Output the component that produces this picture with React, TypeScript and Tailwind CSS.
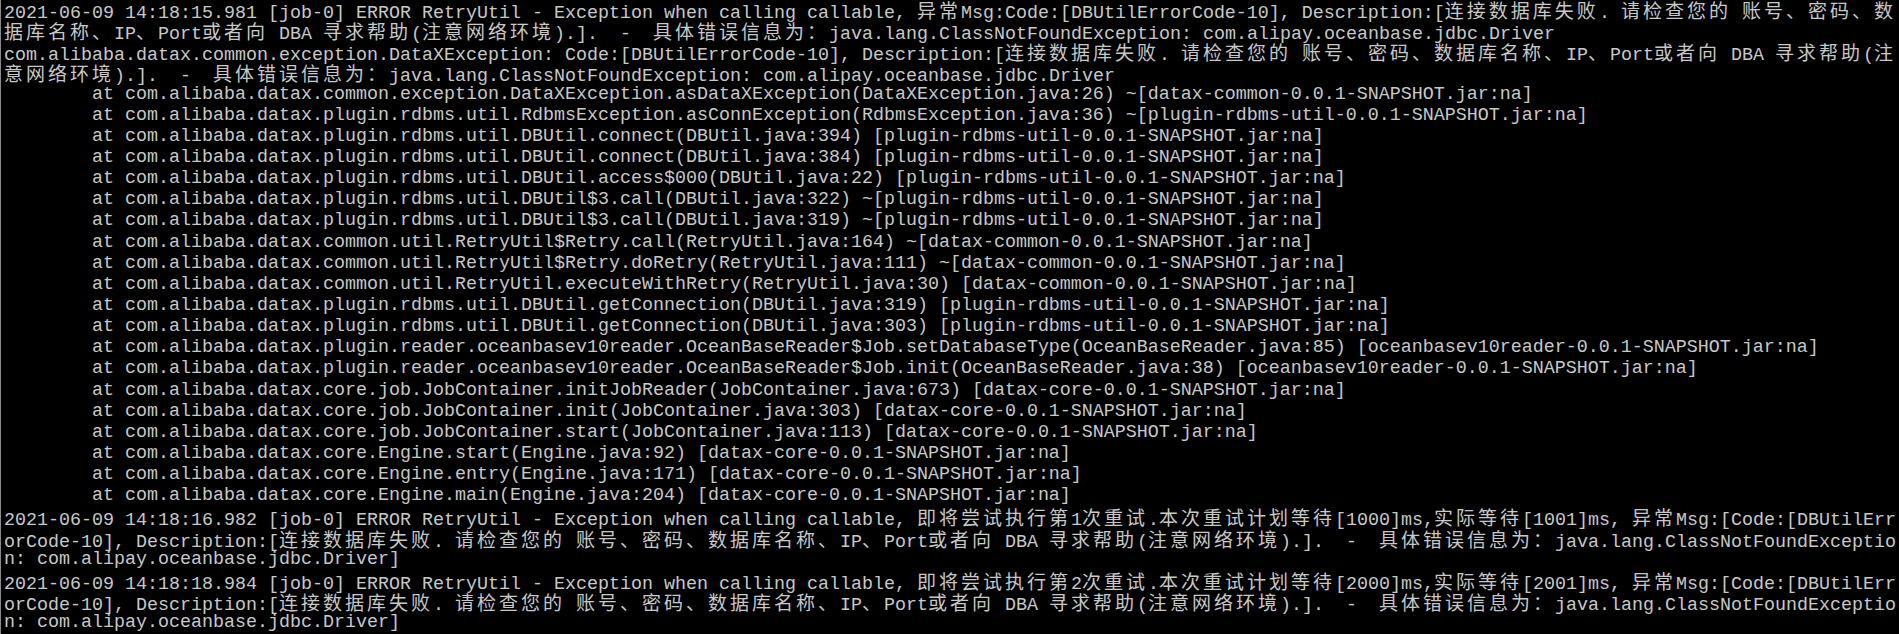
import { FC } from "react";

const TAB = "        ";

const lines: string[] = [
  "2021-06-09 14:18:15.981 [job-0] ERROR RetryUtil - Exception when calling callable, 异常Msg:Code:[DBUtilErrorCode-10], Description:[连接数据库失败. 请检查您的 账号、密码、数",
  "据库名称、IP、Port或者向 DBA 寻求帮助(注意网络环境).].  -  具体错误信息为：java.lang.ClassNotFoundException: com.alipay.oceanbase.jdbc.Driver",
  "com.alibaba.datax.common.exception.DataXException: Code:[DBUtilErrorCode-10], Description:[连接数据库失败. 请检查您的 账号、密码、数据库名称、IP、Port或者向 DBA 寻求帮助(注",
  "意网络环境).].  -  具体错误信息为：java.lang.ClassNotFoundException: com.alipay.oceanbase.jdbc.Driver",
  TAB + "at com.alibaba.datax.common.exception.DataXException.asDataXException(DataXException.java:26) ~[datax-common-0.0.1-SNAPSHOT.jar:na]",
  TAB + "at com.alibaba.datax.plugin.rdbms.util.RdbmsException.asConnException(RdbmsException.java:36) ~[plugin-rdbms-util-0.0.1-SNAPSHOT.jar:na]",
  TAB + "at com.alibaba.datax.plugin.rdbms.util.DBUtil.connect(DBUtil.java:394) [plugin-rdbms-util-0.0.1-SNAPSHOT.jar:na]",
  TAB + "at com.alibaba.datax.plugin.rdbms.util.DBUtil.connect(DBUtil.java:384) [plugin-rdbms-util-0.0.1-SNAPSHOT.jar:na]",
  TAB + "at com.alibaba.datax.plugin.rdbms.util.DBUtil.access$000(DBUtil.java:22) [plugin-rdbms-util-0.0.1-SNAPSHOT.jar:na]",
  TAB + "at com.alibaba.datax.plugin.rdbms.util.DBUtil$3.call(DBUtil.java:322) ~[plugin-rdbms-util-0.0.1-SNAPSHOT.jar:na]",
  TAB + "at com.alibaba.datax.plugin.rdbms.util.DBUtil$3.call(DBUtil.java:319) ~[plugin-rdbms-util-0.0.1-SNAPSHOT.jar:na]",
  TAB + "at com.alibaba.datax.common.util.RetryUtil$Retry.call(RetryUtil.java:164) ~[datax-common-0.0.1-SNAPSHOT.jar:na]",
  TAB + "at com.alibaba.datax.common.util.RetryUtil$Retry.doRetry(RetryUtil.java:111) ~[datax-common-0.0.1-SNAPSHOT.jar:na]",
  TAB + "at com.alibaba.datax.common.util.RetryUtil.executeWithRetry(RetryUtil.java:30) [datax-common-0.0.1-SNAPSHOT.jar:na]",
  TAB + "at com.alibaba.datax.plugin.rdbms.util.DBUtil.getConnection(DBUtil.java:319) [plugin-rdbms-util-0.0.1-SNAPSHOT.jar:na]",
  TAB + "at com.alibaba.datax.plugin.rdbms.util.DBUtil.getConnection(DBUtil.java:303) [plugin-rdbms-util-0.0.1-SNAPSHOT.jar:na]",
  TAB + "at com.alibaba.datax.plugin.reader.oceanbasev10reader.OceanBaseReader$Job.setDatabaseType(OceanBaseReader.java:85) [oceanbasev10reader-0.0.1-SNAPSHOT.jar:na]",
  TAB + "at com.alibaba.datax.plugin.reader.oceanbasev10reader.OceanBaseReader$Job.init(OceanBaseReader.java:38) [oceanbasev10reader-0.0.1-SNAPSHOT.jar:na]",
  TAB + "at com.alibaba.datax.core.job.JobContainer.initJobReader(JobContainer.java:673) [datax-core-0.0.1-SNAPSHOT.jar:na]",
  TAB + "at com.alibaba.datax.core.job.JobContainer.init(JobContainer.java:303) [datax-core-0.0.1-SNAPSHOT.jar:na]",
  TAB + "at com.alibaba.datax.core.job.JobContainer.start(JobContainer.java:113) [datax-core-0.0.1-SNAPSHOT.jar:na]",
  TAB + "at com.alibaba.datax.core.Engine.start(Engine.java:92) [datax-core-0.0.1-SNAPSHOT.jar:na]",
  TAB + "at com.alibaba.datax.core.Engine.entry(Engine.java:171) [datax-core-0.0.1-SNAPSHOT.jar:na]",
  TAB + "at com.alibaba.datax.core.Engine.main(Engine.java:204) [datax-core-0.0.1-SNAPSHOT.jar:na]",
  "2021-06-09 14:18:16.982 [job-0] ERROR RetryUtil - Exception when calling callable, 即将尝试执行第1次重试.本次重试计划等待[1000]ms,实际等待[1001]ms, 异常Msg:[Code:[DBUtilErr",
  "orCode-10], Description:[连接数据库失败. 请检查您的 账号、密码、数据库名称、IP、Port或者向 DBA 寻求帮助(注意网络环境).].  -  具体错误信息为：java.lang.ClassNotFoundExceptio",
  "n: com.alipay.oceanbase.jdbc.Driver]",
  "2021-06-09 14:18:18.984 [job-0] ERROR RetryUtil - Exception when calling callable, 即将尝试执行第2次重试.本次重试计划等待[2000]ms,实际等待[2001]ms, 异常Msg:[Code:[DBUtilErr",
  "orCode-10], Description:[连接数据库失败. 请检查您的 账号、密码、数据库名称、IP、Port或者向 DBA 寻求帮助(注意网络环境).].  -  具体错误信息为：java.lang.ClassNotFoundExceptio",
  "n: com.alipay.oceanbase.jdbc.Driver]",
];

// full width chars take two console cells (22px)
const Line: FC<{ text: string }> = ({ text }) => {
  const parts = text.split(/([\u2E80-\uFFEF]+)/);
  return (
    <div className="h-[21.15px] leading-[21.15px] whitespace-pre">
      {parts.map((p, i) =>
        /[\u2E80-\uFFEF]/.test(p) ? (
          <span
            key={i}
            className="inline-block h-[21.15px] font-['Noto_Sans_CJK_SC',sans-serif] text-[19px] tracking-[3px]"
          >
            {p}
          </span>
        ) : (
          <span key={i}>{p}</span>
        )
      )}
    </div>
  );
};

const App: FC = () => {
  return (
    <div className="h-[634px] w-[1899px] overflow-hidden border-l border-[#8a8a8a] bg-black pl-[3px] font-['Liberation_Mono',monospace] text-[18.33px] text-[#c8c8c8]">
      <div className="-mt-[1px]">
        {lines.map((l, i) => (
          <Line key={i} text={l} />
        ))}
      </div>
    </div>
  );
};

export default App;
